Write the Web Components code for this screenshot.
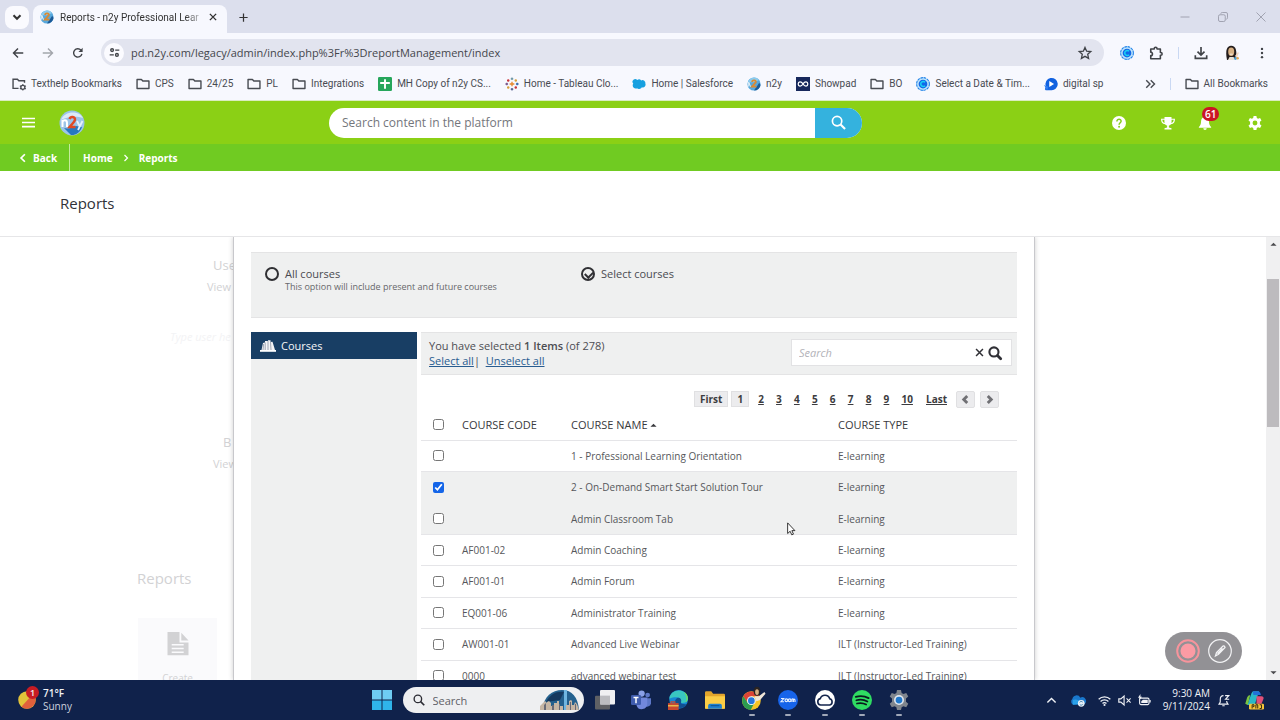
<!DOCTYPE html>
<html lang="en">
<head>
<meta charset="utf-8">
<title>Reports - n2y Professional Learning</title>
<style>
html, body { margin: 0; height: 100%; }
body { font-family: "Open Sans", "Noto Sans", sans-serif; font-size: 11px; color: #404040; overflow: hidden; }
</style>
</head>
<body>
<desktop-screen></desktop-screen>
<script>
const ICONS = {
  down: '<path d="M4 6l4 4 4-4" fill="none" stroke="currentColor" stroke-width="2.400"/>',
  close: '<path d="M3 3l10 10M13 3L3 13" fill="none" stroke="currentColor" stroke-width="2.200"/>',
  thinclose: '<path d="M2 2l12 12M14 2L2 14" fill="none" stroke="currentColor" stroke-width="1.200"/>',
  minus: '<path d="M2 8h12" stroke="currentColor" stroke-width="1.200"/>',
  restore: '<rect x="2" y="5" width="9" height="9" rx="2" fill="none" stroke="currentColor" stroke-width="1.2"/><path d="M5 3.600Q5.400 2 7 2h5q2 0 2 2v5q0 1.600-1.600 2" fill="none" stroke="currentColor" stroke-width="1.2"/>',
  plus: '<path d="M8 2v12M2 8h12" stroke="currentColor" stroke-width="1.8"/>',
  back: '<path d="M15 8H2M8 2L2 8l6 6" fill="none" stroke="currentColor" stroke-width="1.9"/>',
  forward: '<path d="M1 8h13M8 2l6 6-6 6" fill="none" stroke="currentColor" stroke-width="1.9"/>',
  reload: '<path d="M13.2 9.2A5.6 5.6 0 1 1 12 4.2" fill="none" stroke="currentColor" stroke-width="1.9"/><path d="M14.2 1v5.6H8.6z" fill="currentColor"/>',
  tune: '<g fill="none" stroke="currentColor" stroke-width="2"><circle cx="4.5" cy="4.5" r="2"/><path d="M9 4.5h6M1 11.5h6"/><circle cx="11.5" cy="11.5" r="2"/></g>',
  star: '<path d="M8 1.600l1.900 4.300 4.700.5-3.500 3.100 1 4.700L8 11.800l-4.100 2.400 1-4.700L1.400 6.400l4.700-.5z" fill="none" stroke="currentColor" stroke-width="1.5"/>',
  calendly: '<circle cx="8" cy="8" r="7.3" fill="#bfe4fb" stroke="#1b7fe8" stroke-width="1.2" stroke-dasharray="3 .8"/><circle cx="8" cy="8" r="5" fill="#1268e8"/><path d="M10.300 6.100A2.800 2.800 0 1 0 10.300 9.900" fill="none" stroke="#19d0f4" stroke-width="1.800"/>',
  puzzle: '<path d="M2 3.500h4V3a1.600 1.600 0 0 1 3.200 0v.5H13v4h.500a1.500 1.500 0 0 1 0 3H13v4H2v-3.500c2.600 0 2.600-4 0-4z" fill="none" stroke="currentColor" stroke-width="1.800" stroke-linejoin="round"/>',
  download: '<path d="M8 1v9M4 6.500l4 4 4-4M1.500 10.500V14.200h13v-3.700" fill="none" stroke="currentColor" stroke-width="1.900"/>',
  avatar: '<path d="M3 15C1 5 3 1 7 .8c5-.2 6 5 5 13z" fill="#241d1c"/><ellipse cx="7.200" cy="6.800" rx="3" ry="4.200" fill="#d8b184"/><path d="M4 15l1.500-3h4l2 3z" fill="#e8e0d4"/><path d="M11 11l3-4 .8 1-2 5z" fill="#f3d6c1"/><circle cx="11.500" cy="13.500" r="1.400" fill="#4aa0d8"/><circle cx="13.700" cy="13.300" r="1.200" fill="#e4a650"/><path d="M5.800 9.200h3" stroke="#fff" stroke-width=".8"/>',
  dots: '<g fill="currentColor"><circle cx="8" cy="2.500" r="1.600"/><circle cx="8" cy="8" r="1.600"/><circle cx="8" cy="13.500" r="1.600"/></g>',
  folder: '<path d="M1.200 13.200V2.800h5l1.600 1.800h7v8.600z" fill="none" stroke="currentColor" stroke-width="1.600" stroke-linejoin="round"/>',
  foldergear: '<path d="M7.500 13H1.200V2.500h5l1.600 1.800h6.500v2.200" fill="none" stroke="currentColor" stroke-width="1.600"/><circle cx="12.400" cy="11.800" r="2.300" fill="none" stroke="currentColor" stroke-width="1.500"/><path d="M12.400 8v1.500M12.400 14v1.500M9 10l1.300.8M15.800 10l-1.300.8M9 13.700l1.300-.8M15.800 13.700l-1.300-.8" stroke="currentColor" stroke-width="1.200"/>',
  sheets: '<rect width="16" height="16" rx="1.500" fill="#26a65b"/><path d="M8 2.500v11M2.500 6.800h11" stroke="#fff" stroke-width="2.200"/>',
  tableau: '<g stroke-width="1.500"><path d="M8 5.300v5.400M5.300 8h5.400" stroke="#e8862c"/><path d="M8 .5v3M6.600 2h2.800" stroke="#7099a6"/><path d="M8 12.500v3M6.600 14h2.800" stroke="#5b6591"/><path d="M.5 8h3M2 6.600v2.800" stroke="#7b5a8e"/><path d="M12.500 8h3M14 6.600v2.800" stroke="#3b6db0"/><path d="M3.700 2.500v3M2.300 4h2.800" stroke="#c9353c"/><path d="M12.300 2.500v3M10.900 4h2.800" stroke="#d8a03c"/><path d="M3.700 10.500v3M2.300 12h2.800" stroke="#d8a03c"/><path d="M12.300 10.500v3M10.900 12h2.800" stroke="#c9353c"/></g>',
  cloudblue: '<path d="M4 13a3.500 3.500 0 0 1-2.600-5.500A3 3 0 0 1 6 3.400a3.200 3.200 0 0 1 4.500.5 3.400 3.400 0 0 1 4.800 3.600 3.200 3.200 0 0 1-4 4.300A3.200 3.200 0 0 1 6.500 13z" fill="#17a0e0"/>',
  n2y: '<circle cx="13" cy="13" r="12.500" fill="#9cc4e8"/><path d="M2 10C5 1 20 0 24 8c-6-2-14-2-22 2z" fill="#dceaf7"/><path d="M5 18c4 1 8 0 12-2l6 1c-2 6-7 8.500-11 8z" fill="#2678c0"/><path d="M3.500 17v-7M3.500 12c1-2.500 4.500-2.500 4.500 1v4" fill="none" stroke="#fff" stroke-width="2"/><path d="M10.500 9c1-3 6-2.500 5.500.8-.4 2.500-3 4-5.500 7.200h6" fill="none" stroke="#e04a24" stroke-width="2.400"/><path d="M18 11l2.500 5M23.500 11l-4.500 9" stroke="#e6f2fb" stroke-width="1.800"/>',
  n2ysmall: '<circle cx="8" cy="8" r="7.500" fill="#58a8dc"/><path d="M1 6a7.500 7.500 0 0 1 13-2.500L8 6z" fill="#8ccbee"/><path d="M8 15.500l6-9 1.500 2.500a7.500 7.500 0 0 1-7.500 6.500z" fill="#1b5a98"/><path d="M5.500 5.500c1-2.500 5-2 4.500.5L5.800 11h5" fill="none" stroke="#d98a34" stroke-width="2.200"/><path d="M2 11V6l2 5" fill="none" stroke="#fff"/>',
  showpad: '<rect width="16" height="16" fill="#17285c"/><path d="M8 8C6 4.500 2.500 5 2.500 8S6 11.500 8 8s5.500-3 5.500 0S10 11.500 8 8z" fill="none" stroke="#fff" stroke-width="1.400"/>',
  digital: '<path d="M2 15l-1-1 1.200-3.500A7 7 0 1 1 8 15z" fill="#1262e0"/><path d="M6 4.500v7l5.500-3.500z" fill="#fff"/><path d="M0 9l5 2-1.500 4z" fill="#2f7df0"/>',
  dblright: '<path d="M3 3l5 5-5 5M9 3l5 5-5 5" fill="none" stroke="currentColor" stroke-width="1.900"/>',
  menu: '<path d="M0 3h16M0 8h16M0 13h16" stroke="currentColor" stroke-width="2"/>',
  search: '<circle cx="6.500" cy="6.500" r="5" fill="none" stroke="currentColor" stroke-width="1.800"/><path d="M10.200 10.200L15 15" stroke="currentColor" stroke-width="2.200"/>',
  boldsearch: '<circle cx="6.800" cy="6.800" r="5.200" fill="none" stroke="currentColor" stroke-width="2.400"/><path d="M10.800 10.800L14.500 14.500" stroke="currentColor" stroke-width="3.200" stroke-linecap="round"/>',
  help: '<circle cx="8" cy="8" r="8" fill="currentColor"/><path d="M5.600 6.200C5.600 2.700 10.600 3 10.400 6c-.1 1.700-2.300 1.800-2.300 4" fill="none" stroke="#83cd18" stroke-width="1.700"/><circle cx="8.100" cy="12.200" r="1.100" fill="#83cd18"/>',
  trophy: '<path d="M4 1h8v2h4c0 4-1.500 6-4.600 6.300-.7.900-1.600 1.400-2.400 1.600V13l3 1v1.500H4V14l3-1v-2.100c-.8-.2-1.700-.7-2.400-1.600C1.500 9 0 7 0 3h4zM1.500 4.200C1.700 6.300 2.500 7.400 4.200 8 3.800 6.700 3.900 5.500 3.900 4.200zm13 0h-2.400c0 1.300.1 2.500-.3 3.800 1.700-.6 2.500-1.700 2.700-3.800z" fill="currentColor"/>',
  bell: '<path d="M8 1c3 0 4.500 2.200 4.500 5 0 3.500 1 5 2.500 6.500v.8H1v-.8C2.500 11 3.500 9.500 3.500 6 3.500 3.200 5 1 8 1zM6 14h4a2 2 0 0 1-4 0z" fill="currentColor"/>',
  gear: '<path fill-rule="evenodd" d="M6.400 0h3.200l.5 2.300 1.400.8 2.300-.8 1.600 2.800-1.800 1.600v2.600l1.800 1.600-1.600 2.800-2.300-.8-1.400.8-.5 2.300H6.400l-.5-2.300-1.400-.8-2.300.8L.6 10.900l1.800-1.600V6.700L.6 5.100l1.600-2.800 2.300.8 1.400-.8zM8 5.200a2.800 2.800 0 1 0 0 5.600 2.800 2.800 0 0 0 0-5.600z" fill="currentColor"/>',
  left: '<path d="M11 2L5 8l6 6" fill="none" stroke="currentColor" stroke-width="2.800"/>',
  right: '<path d="M5 2l6 6-6 6" fill="none" stroke="currentColor" stroke-width="2.400"/>',
  boldleft: '<path d="M10.500 3L5.500 8l5 5" fill="none" stroke="currentColor" stroke-width="4.200"/>',
  boldright: '<path d="M5.500 3l5 5-5 5" fill="none" stroke="currentColor" stroke-width="4.200"/>',
  books: '<path d="M1.500 12L3 5l2-.5V3h3v-.8h2.500V4l2-.3L15 12z" fill="#f4f4f6"/><path d="M5.200 4.500V12M8 3v9M10.500 4l.5 8M3.600 6L3 12" stroke="#8b93a2" stroke-width=".8"/><path d="M0 12h16v1.800H0z" fill="#fff"/>',
  up: '<path d="M1 11l7-7 7 7z" fill="currentColor"/>',
  downfill: '<path d="M1 5l7 7 7-7z" fill="currentColor"/>',
  doc: '<path fill-rule="evenodd" d="M1 0h8v7h6v8.500H1zM3.800 8v1h8V8zm0 2.500v1h8v-1zm0 2.500v1h8v-1zM10.200.5L15 5.700h-4.800z" fill="currentColor"/>',
  chevup: '<path d="M2 11l6-6 6 6" fill="none" stroke="currentColor" stroke-width="2"/>',
  onedrive: '<path d="M3.500 12.500a3.500 3.500 0 0 1-1-6A4.500 4.500 0 0 1 11 5a3.800 3.800 0 0 1 4 7z" fill="#1a78cc"/><path d="M3 7.500c3-1.500 6-.5 11 4l-11 1z" fill="#2aa0e8"/><circle cx="12" cy="11" r="3.600" fill="#e8f0f6"/><path d="M10.300 10a2 2 0 0 1 3.200-.3M13.700 12a2 2 0 0 1-3.200.3" fill="none" stroke="#3c7cac" stroke-width="1"/>',
  wifi: '<g fill="none" stroke="currentColor" stroke-width="1.500"><path d="M.8 6.500a10 10 0 0 1 14.400 0M3.200 9.200a6.600 6.600 0 0 1 9.600 0M5.600 11.700a3.300 3.300 0 0 1 4.800 0"/></g><circle cx="8" cy="13.600" r="1.300" fill="currentColor"/>',
  mute: '<path d="M1 6h2.500L7.500 2.500v11L3.500 10H1z" fill="none" stroke="currentColor" stroke-width="1.400"/><path d="M10.500 5.500l5 5M15.500 5.500l-5 5" stroke="currentColor" stroke-width="1.300"/>',
  battery: '<rect x="2" y="5" width="11.500" height="8" rx="1.500" fill="none" stroke="currentColor" stroke-width="1.400"/><path d="M14.800 7.500v3" stroke="currentColor" stroke-width="1.600"/><path d="M6 7h6v4H4V9z" fill="currentColor"/><path d="M3 0L0 4.500h2L1 8l4-4.500H3z" fill="currentColor"/>',
  bellz: '<path d="M8 2C5 2 4 4.500 4 7v3l-1.500 2.500h11L12 10V8.500M6.500 14.500h3M10 2h4.500L10.500 6.500H15" fill="none" stroke="currentColor" stroke-width="1.400"/>',
  copilot: '<path d="M3 11L6 2.500Q6.500 1 8 1h4L9 10.500Q8.500 12 7 12H2.500z" fill="#28b8c8"/><path d="M1 11l1.500-5Q3 4 5 4l-2 8z" fill="#7cc440"/><path d="M7 1h4q2 0 2.500 3h-6z" fill="#2270d8"/><path d="M10 5h4q2 0 1.600 2L14 11h-4z" fill="#e05078"/><rect x="4" y="11" width="12" height="4.600" rx="1" fill="#f5c53a"/><path d="M6.500 14.800v-3h1.500v1.500h-1M9.500 14.800v-3h1.500v3M12.500 14.800h1.500v-3h-1.500" fill="none" stroke="#3a2d10" stroke-width=".8"/>',
  weather: '<circle cx="8" cy="8" r="7.800" fill="#e2c23a"/><path d="M13.500 2.500A7.800 7.800 0 0 1 3 14z" fill="#e0603c"/>',
  windows: '<path d="M0 0h7.600v7.600H0zM8.400 0H16v7.600H8.400z" fill="#6fccf3"/><path d="M0 8.400h7.600V16H0zM8.400 8.400H16V16H8.400z" fill="#2fb4ea"/>',
  skyline: '<path d="M2 20C4 6 12 0 22 0s16 7 17 20z" fill="#24618e"/><path d="M6 12C10 4 17 1 24 2l-4 8z" fill="#15385e"/><path d="M24 0h3v20h-3z" fill="#70b6e0"/><path d="M0 20v-4l5-5 2 2v-1l2-1 2 2v3h3v-3h3v-2h2v5h4v4zM26 20v-5h3v-4l2-1 1 1v4h2l1-3 2 2 2 6z" fill="#c6b6a4"/><path d="M4 20v-5l2-2v7zM12 20v-5h2v5zM19 20v-6h1v6zM30 20v-8h1v8zM35 20v-6h1v6z" fill="#686a76"/>',
  taskview: '<rect x="0" y="4.500" width="12" height="11" rx=".8" fill="#5f6064"/><rect x="4" y="0" width="12" height="11.500" rx=".8" fill="#f0f0f2"/><path d="M4 4.500h8v7H4z" fill="#bcbcc0"/>',
  teams: '<circle cx="13.300" cy="4" r="1.900" fill="#5d77c8"/><circle cx="8.500" cy="2.800" r="2.500" fill="#8aa0e8"/><path d="M11 6.500h5v4a3 3 0 0 1-5 2z" fill="#5d77c8"/><path d="M4.500 6h8.500v5a4.400 4.400 0 0 1-8.500 1.500z" fill="#7288dc"/><rect x="0" y="4" width="8" height="8" rx="1" fill="#3f5cae"/><path d="M2 6h4M4 6v4.500" stroke="#fff" stroke-width="1.200"/>',
  edge: '<circle cx="8.500" cy="7.500" r="7.500" fill="#1787d4"/><path d="M1 7C2-1 14-2 16 6c.6 4-4 5-6 4 2-3-2-6-9-3z" fill="#39c6c0"/><path d="M13 1.500C16 3.500 17 8 14 10c2-4 0-6-1-8.500z" fill="#74dc50"/><path d="M5.500 10c0-3 3-5 4.500-3 1.500 2-.5 3 1 4l4 .5c-2 4-9.500 4-9.500-1.500z" fill="#124f90"/><rect x="0" y="10.500" width="8.500" height="5.500" fill="#c84830"/><path d="M0 12h8.500v1.200H0z" fill="#e8b84c"/><path d="M2.500 10.500v-1h3v1" stroke="#c84830" fill="none"/>',
  explorer: '<path d="M0 2q0-1 1-1h4l1.500 2H15q1 0 1 1v11H0z" fill="#e2a52c"/><path d="M0 5h16v9q0 1-1 1H1q-1 0-1-1z" fill="#fbcd45"/><path d="M2.500 15v-2.500q0-1.500 1.500-1.500h8q1.500 0 1.500 1.500V15z" fill="#1c7fd0"/><path d="M4.500 12.500h7" stroke="#0d5a9c" stroke-width="1"/>',
  chrome: '<circle cx="7.500" cy="8.500" r="7.500" fill="#f6c526"/><path d="M1 5a7.500 7.500 0 0 1 13 0H7.500L4.500 10z" fill="#dc4437"/><path d="M1 5a7.500 7.500 0 0 0 6 11l3-6-5.500 0z" fill="#2c9c50"/><circle cx="7.500" cy="8.500" r="3.500" fill="#f4f8fc"/><circle cx="7.500" cy="8.500" r="2.700" fill="#2878dc"/><ellipse cx="12" cy="1" rx="2.600" ry="3.600" fill="#2a2422"/><ellipse cx="12" cy="1.600" rx="1.500" ry="2.300" fill="#d8b184"/><path d="M10 5l3.500 0L18 1.500l.8 1.500L14.500 8l-3 1z" fill="#f0e6d8"/>',
  zoom: '<circle cx="8" cy="8" r="8" fill="#1764ea"/><g fill="none" stroke="#e6effe" stroke-width=".9"><path d="M2.400 6.800h2.200l-2.200 2.600h2.400"/><circle cx="6.700" cy="8.200" r="1.100"/><circle cx="9.300" cy="8.200" r="1.100"/><path d="M11.100 9.600V7.400q1-.8 1.200.4v1.800V7.800q1.200-1 1.300.2v1.600"/></g>',
  cloud: '<circle cx="8" cy="8" r="8" fill="#fff"/><path d="M4.500 12a2.600 2.600 0 0 1-.3-5.100A4 4 0 0 1 11.800 7a2.600 2.600 0 0 1 0 5z" fill="#fff" stroke="#14254c" stroke-width="1.300"/>',
  spotify: '<circle cx="8" cy="8" r="8" fill="#2fdc62"/><path d="M3 5.500q5.500-1.600 10.300 1M3.500 8.200q4.800-1.300 8.800 1M4 10.800q4-1 7.300.8" fill="none" stroke="#0a1a1e" stroke-width="1.400" stroke-linecap="round"/>',
  settings: '<path d="M6.400 0h3.200l.5 2.300 1.400.8 2.300-.8 1.600 2.800-1.800 1.600v2.600l1.800 1.600-1.600 2.800-2.300-.8-1.400.8-.5 2.300H6.400l-.5-2.300-1.400-.8-2.300.8L.6 10.900l1.800-1.600V6.700L.6 5.100l1.600-2.800 2.300.8 1.400-.8z" fill="#80868e"/><circle cx="8" cy="8" r="4" fill="#dfe6ee"/><circle cx="8" cy="8" r="2.700" fill="#2078cc"/>',
  record: '<circle cx="12" cy="12" r="10.800" fill="none" stroke="#f7949c" stroke-width="2"/><circle cx="12" cy="12" r="7.500" fill="#fb9ba4"/>',
  pen: '<circle cx="12" cy="12" r="11.300" fill="none" stroke="#f2f2f4" stroke-width="1.200"/><path d="M7.500 17l1-3.500 6.500-6.500q1.500-.5 2 1.500l-6.500 6.800zM9.500 14.800L14.500 9.500" fill="none" stroke="#f2f2f4" stroke-width="1.300"/>',
  cursor: '<path d="M.7.700v11.800l2.800-2.500 1.800 4 1.900-.8-1.800-3.900h3.400z" fill="#fff" stroke="#222" stroke-width="1"/>'
};
const BOXES = { n2y: '0 0 26 26', skyline: '0 0 40 20', record: '0 0 24 24', pen: '0 0 24 24', cursor: '0 0 10 15' };
const BASE = '*{box-sizing:border-box}button,input{font:inherit;color:inherit;margin:0;padding:0;border:0;background:none}button{display:flex;align-items:center;justify-content:center}a{color:inherit;text-decoration:none}';

function define(tag, css, html) {
  const template = document.createElement('template');
  customElements.define(tag, class extends HTMLElement {
    connectedCallback() {
      if (this.shadowRoot) return;
      template.innerHTML = '<style>' + BASE + css + '</style>' + (typeof html === 'function' ? html(this) : html);
      this.attachShadow({ mode: 'open' }).append(template.content.cloneNode(true));
    }
  });
}

define('ui-icon', ':host{display:block;flex:none;width:14px;height:14px}svg{display:block;width:100%;height:100%;overflow:visible}',
  el => { const n = el.getAttribute('name'); return `<svg viewBox="${BOXES[n] || '0 0 16 16'}" aria-hidden="true">${ICONS[n]}</svg>`; });

define('tab-strip', `
:host{display:flex;height:33px;background:#dcdfed;padding:5px 13px 0 5px;align-items:center;color:#333}
.list{width:24px;height:23px;border-radius:8px;background:#fafafe;margin:0 4px 4px 0}
.list ui-icon{width:14px;height:14px}
.tab{width:194px;height:28px;display:flex;align-items:center;gap:6px;padding:0 9px 4px 7px;background:#f7f8fe;border-radius:8px 8px 0 0;font-family:Roboto,"Open Sans",sans-serif;font-size:10px}
.tab span{flex:1;white-space:nowrap;-webkit-mask-image:linear-gradient(90deg,#000 88%,#0003)}
.tab .x,.tab .x ui-icon{width:10px;height:10px}
.new{margin-left:11px;padding-bottom:4px}.new ui-icon{width:11px;height:11px}
.win{margin-left:auto;display:flex;gap:26px;color:#9a9caa;padding-bottom:4px}
.win ui-icon{width:12px;height:12px}`,
`<button class="list" aria-label="Search tabs"><ui-icon name="down"></ui-icon></button>
<div class="tab"><ui-icon name="n2ysmall"></ui-icon><span>Reports - n2y Professional Lear</span><button class="x" aria-label="Close tab"><ui-icon name="close"></ui-icon></button></div>
<button class="new" aria-label="New tab"><ui-icon name="plus"></ui-icon></button>
<div class="win"><button aria-label="Minimize"><ui-icon name="minus"></ui-icon></button><button aria-label="Restore"><ui-icon name="restore"></ui-icon></button><button aria-label="Close"><ui-icon name="thinclose"></ui-icon></button></div>`);

define('address-bar', `
:host{display:flex;height:39px;align-items:center;background:#f7f8fe;padding:0 12px;color:#404348}
.nav{display:flex;gap:18px;margin-right:17px}.nav ui-icon,.tools ui-icon{width:12px;height:12px}.nav button:nth-child(2){color:#a3a6ac}
.box{flex:1;height:27px;display:flex;align-items:center;border-radius:14px;background:#e2e4ef;padding:0 12px 0 3px}
.tune{width:20px;height:20px;border-radius:50%;background:#fbfbff;margin-right:7px}.tune ui-icon{width:11px;height:11px}
input{flex:1;min-width:0;height:24px;font-size:11px;color:#44464c;outline:0}
.tools{display:flex;align-items:center;gap:15px;margin-left:16px}
.tools ui-icon{width:14px;height:14px}.tools hr{width:1px;height:12px;border:0;background:#c9d8f3;margin:0}
.tools .pic{width:18px;height:16px}.tools .dots{width:12px;height:12px}`,
`<div class="nav"><button aria-label="Back"><ui-icon name="back"></ui-icon></button><button aria-label="Forward"><ui-icon name="forward"></ui-icon></button><button aria-label="Reload"><ui-icon name="reload"></ui-icon></button></div>
<div class="box"><button class="tune" aria-label="Site information"><ui-icon name="tune"></ui-icon></button><input aria-label="Address" value="pd.n2y.com/legacy/admin/index.php%3Fr%3DreportManagement/index"><button aria-label="Bookmark this page"><ui-icon name="star"></ui-icon></button></div>
<div class="tools"><button aria-label="Calendly"><ui-icon name="calendly"></ui-icon></button><button aria-label="Extensions"><ui-icon name="puzzle"></ui-icon></button><hr><button aria-label="Downloads"><ui-icon name="download"></ui-icon></button><button aria-label="Profile"><ui-icon class="pic" name="avatar"></ui-icon></button><button aria-label="Menu"><ui-icon class="dots" name="dots"></ui-icon></button></div>`);

define('bookmark-link', `:host{display:block;flex:none}a{display:flex;align-items:center;gap:5px;white-space:nowrap}`,
  el => `<a href="#"><ui-icon name="${el.getAttribute('icon')}"></ui-icon><slot></slot></a>`);

define('bookmarks-bar', `
:host{display:flex;height:29px;align-items:center;padding:0 12px 5px;gap:14px;background:#f7f8fe;color:#484b52;font-family:Roboto,"Open Sans",sans-serif;font-size:10px;border-bottom:1px solid #d9ecc0}
.end{margin-left:auto;display:flex;align-items:center;gap:14px}.end .more{width:12px;height:12px}hr{width:1px;height:12px;border:0;background:#c9d8f3;margin:0}`,
[['foldergear','Texthelp Bookmarks'],['folder','CPS'],['folder','24/25'],['folder','PL'],['folder','Integrations'],['sheets','MH Copy of n2y CS...'],['tableau','Home - Tableau Clo...'],['cloudblue','Home | Salesforce'],['n2ysmall','n2y'],['showpad','Showpad'],['folder','BO'],['calendly','Select a Date &amp; Tim...'],['digital','digital sp']].map(([i, t]) => `<bookmark-link icon="${i}">${t}</bookmark-link>`).join('') +
`<div class="end"><button aria-label="More bookmarks"><ui-icon class="more" name="dblright"></ui-icon></button><hr><bookmark-link icon="folder">All Bookmarks</bookmark-link></div>`);

define('site-header', `
:host{display:grid;grid-template-columns:329fr 533fr 418fr;align-items:center;height:43px;background:#8bd015;color:#fff}
.left{display:flex;align-items:center;gap:23px;padding-left:21px}.left .menu{width:15px;height:13px}.left .logo{width:26px;height:26px}
form{display:flex;height:30px;border-radius:15px;overflow:hidden;background:#fff}
input{flex:1;min-width:0;padding-left:13px;font-size:12px;outline:0;color:#555}input::placeholder{color:#74767c;opacity:1}
form button{width:47px;background:#34b2de}form ui-icon{width:15px;height:15px}
.right{display:flex;justify-content:flex-end;align-items:center;gap:35px;padding-right:18px}
.note{position:relative;margin:0 1px 0 -12px}.badge{position:absolute;left:4px;top:-9px;background:#cb1526;border-radius:8px;font-size:10px;line-height:14px;padding:0 3px;font-weight:600}`,
`<div class="left"><button aria-label="Menu"><ui-icon class="menu" name="menu"></ui-icon></button><a href="#" aria-label="n2y home"><ui-icon class="logo" name="n2y"></ui-icon></a></div>
<form><input type="text" aria-label="Search content" placeholder="Search content in the platform"><button type="button" aria-label="Search"><ui-icon name="search"></ui-icon></button></form>
<div class="right"><button aria-label="Help"><ui-icon name="help"></ui-icon></button><button aria-label="Awards"><ui-icon name="trophy"></ui-icon></button><button class="note" aria-label="Notifications"><ui-icon name="bell"></ui-icon><span class="badge">61</span></button><button aria-label="Settings"><ui-icon name="gear"></ui-icon></button></div>`);

define('crumb-bar', `
:host{display:flex;height:27px;align-items:center;background:#70cb22;color:#fff;font-size:10px;font-weight:700}
.back{display:flex;align-items:center;gap:5px;padding:0 12px 0 18px;height:100%;border-right:1px solid #c5ec9c;margin-right:13px}
ui-icon{width:10px;height:10px}ui-icon.sep{width:8px;height:8px;margin:0 9px}`,
`<a class="back" href="#"><ui-icon name="left"></ui-icon>Back</a><a href="#">Home</a><ui-icon class="sep" name="right"></ui-icon><a href="#">Reports</a>`);

define('page-title', `:host{display:block;padding:0 60px;height:66px;background:#fff;border-bottom:1px solid #e6e6e8}h1{margin:0;font-size:15px;line-height:65px;font-weight:500;color:#303238}`, `<h1><slot></slot></h1>`);

define('page-backdrop', `
:host{display:block;color:#d2d2d4;font-size:11px;overflow:hidden}
.col{width:calc(50% - 399px);height:100%;display:grid;grid-template-rows:58px 113px 66px 116px 1fr;white-space:nowrap}
.s{justify-self:end;width:27px;padding-top:16px}.s p,.s h2{margin:0;font-weight:400}.s h2{font-size:13px;line-height:24px;padding-left:6px}.s p{line-height:20px}
.b{padding-top:22px;width:21px}.b h2{padding-left:10px}
.type{justify-self:end;align-self:start;margin-top:34px;color:#f3f3f5;font-style:italic;width:64px}
.rep{margin-left:137px;align-self:end}h3{margin:0;font-size:15px;font-weight:400;line-height:24px}
.card{margin:28px 0 0 138px;width:79px;background:#fafafc;height:80px;display:flex;flex-direction:column;align-items:center;padding-top:13px;gap:14px;font-size:10px}.card ui-icon{width:24px;height:26px}`,
`<div class="col"><div class="s"><h2>Use</h2><p>View</p></div><div class="type">Type user he</div><div class="s b"><h2>B</h2><p>View</p></div><div class="rep"><h3>Reports</h3></div><div class="card"><ui-icon name="doc"></ui-icon>Create</div></div>`);

define('course-scope', `
:host{display:grid;grid-template-columns:316px 1fr;height:66px;background:#eff0f0;border:1px solid #e4e4e5;border-width:1px 0;padding:14px;color:#4a4b50}
label{display:grid;grid-template-columns:14px 1fr;gap:0 6px;align-items:center;line-height:14px;align-content:start}
small{grid-column:2;font-size:9px;line-height:12px;color:#66676a}
input{appearance:none;width:14px;height:14px;border:2px solid #303034;border-radius:50%;position:relative}
input:checked::after{content:"";position:absolute;left:2px;top:2px;width:6px;height:4px;border:solid #303034;border-width:0 0 2px 2px;transform:rotate(-45deg)}`,
`<label><input type="radio" name="scope">All courses<small>This option will include present and future courses</small></label><label><input type="radio" name="scope" checked>Select courses</label>`);

define('course-nav', `
:host{display:block;background:#eff0f0;width:166px}
a{display:flex;align-items:center;gap:5px;height:27px;padding:0 9px;background:#183e64;color:#f4f6f8;font-size:11px}ui-icon{width:16px;height:16px}`,
`<a href="#"><ui-icon name="books"></ui-icon>Courses</a>`);

define('selection-bar', `
:host{display:flex;justify-content:space-between;align-items:center;height:43px;background:#eff0f0;border:1px solid #e4e4e5;border-width:1px 0;padding:0 5px 2px 8px;color:#4c4d52}
p{margin:0;line-height:15px}b{font-weight:600}p a{color:#285c90;text-decoration:underline;font-weight:500}
form{display:flex;align-items:center;width:221px;height:27px;background:#fff;border:1px solid #e2e2e4;padding:0 9px 0 7px;gap:3px;color:#303036}
input{flex:1;min-width:0;font-style:italic;outline:0}input::placeholder{color:#b2b2b8;opacity:1}
.x{width:11px;height:11px}`,
`<div><p>You have selected <b>1 Items</b> (of 278)</p><p><a href="#">Select all</a>| &nbsp;<a href="#">Unselect all</a></p></div>
<form><input type="text" aria-label="Search courses" placeholder="Search"><button type="button" aria-label="Clear"><ui-icon class="x" name="close"></ui-icon></button><button type="button" aria-label="Search"><ui-icon name="boldsearch"></ui-icon></button></form>`);

define('page-links', `
:host{display:flex;align-items:center;justify-content:flex-end;height:34px;padding:14px 18px 0 0;color:#3c3c40;font-size:10px;font-weight:700}
nav{display:flex;align-items:center;width:305px}
a{display:block;line-height:14px;text-decoration:underline}
.nums{flex:1;display:flex;justify-content:space-between;margin:0 13px 0 9px}
.on{background:#ececee;border:1px solid #e0e0e2;text-decoration:none;padding:0 5px}.one{margin-left:3px}
button{width:19px;height:17px;background:#ececee;border:1px solid #e0e0e2;border-radius:2px;color:#707074;margin-left:5px}.last{margin-right:4px}ui-icon{width:11px;height:11px}`,
`<nav aria-label="Pages"><a class="on" href="#">First</a><a class="on one" href="#">1</a><div class="nums">${[2,3,4,5,6,7,8,9,10].map(n => `<a href="#">${n}</a>`).join('')}</div><a class="last" href="#">Last</a><button aria-label="Previous page"><ui-icon name="boldleft"></ui-icon></button><button aria-label="Next page"><ui-icon name="boldright"></ui-icon></button></nav>`);

const COURSES = [
  ['', '1 - Professional Learning Orientation', 'E-learning'],
  ['', '2 - On-Demand Smart Start Solution Tour', 'E-learning', 'picked'],
  ['', 'Admin Classroom Tab', 'E-learning', 'hover'],
  ['AF001-02', 'Admin Coaching', 'E-learning'],
  ['AF001-01', 'Admin Forum', 'E-learning'],
  ['EQ001-06', 'Administrator Training', 'E-learning'],
  ['AW001-01', 'Advanced Live Webinar', 'ILT (Instructor-Led Training)'],
  ['0000', 'advanced webinar test', 'ILT (Instructor-Led Training)']
];
define('course-table', `
:host{display:block;color:#56575b}
table{width:100%;height:283px;border-collapse:collapse;table-layout:fixed;font-size:10px}
tr{height:31px}
th{font-size:11px;font-weight:400;text-align:left;color:#38393d}
th,td{padding:0;border-bottom:1px solid #e5e5e8}
.c{width:41px;padding-left:12px}.code{width:109px}.name{width:267px}
.picked td,.hover td{background:#eff0f0}.picked td{border-bottom-color:#eff0f0}
input{display:block;width:11px;height:11px;accent-color:#1465e8}
th ui-icon{display:inline-block;width:7px;height:7px;margin-left:2px}`,
`<table><thead><tr><th class="c"><input type="checkbox" aria-label="Select all rows"></th><th class="code">COURSE CODE</th><th class="name">COURSE NAME<ui-icon name="up"></ui-icon></th><th>COURSE TYPE</th></tr></thead><tbody>${COURSES.map(r => `<tr class="${r[3] || ''}"><td class="c"><input type="checkbox" aria-label="${r[1]}"${r[3] === 'picked' ? ' checked' : ''}></td><td>${r[0]}</td><td>${r[1]}</td><td>${r[2]}</td></tr>`).join('')}</tbody></table>`);

define('course-dialog', `
:host{display:block;width:802px;background:#fff;border:1px solid #c8c8cc;border-width:0 1px;box-shadow:0 0 5px #0003;padding:15px 17px 0 17px;box-sizing:border-box;overflow:hidden}
.cols{display:flex;gap:4px;margin-top:14px;height:100%}.main{flex:1;min-width:0}`,
`<course-scope></course-scope><div class="cols"><course-nav></course-nav><div class="main"><selection-bar></selection-bar><page-links></page-links><course-table></course-table></div></div>`);

define('scroll-bar', `
:host{display:flex;flex-direction:column;justify-content:space-between;align-items:center;width:14px;background:#f0f0f1;color:#4a4a4e;padding:4px 0;box-sizing:border-box}
ui-icon{width:7px;height:7px}.track{flex:1;align-self:stretch;padding:31px 1px 0}.thumb{height:38%;background:#bdbbbe}`,
`<ui-icon name="up"></ui-icon><div class="track"><div class="thumb"></div></div><ui-icon name="downfill"></ui-icon>`);

define('screen-recorder', `
:host{display:flex;align-items:center;gap:8px;padding:7px 10px 7px 11px;border-radius:19px;background:#929195}
ui-icon{width:24px;height:24px}`,
`<button aria-label="Stop recording"><ui-icon name="record"></ui-icon></button><button aria-label="Draw"><ui-icon name="pen"></ui-icon></button>`);

define('task-bar', `
:host{display:grid;grid-template-columns:1fr 537px 1fr;align-items:center;height:40px;background:#10224b;color:#f0f2f6;font-size:10px;line-height:13px}
.weather{display:flex;align-items:center;gap:7px;padding-left:18px}.sun{position:relative}.sun ui-icon{width:18px;height:18px}.sun b{position:absolute;left:8px;top:-5px;width:13px;height:13px;border-radius:50%;background:#c81c24;text-align:center;font-weight:600;font-size:9px}
.weather span{color:#ccd2de}.weather strong{font-weight:600;color:#f0f2f6}
.apps{display:flex;align-items:center;gap:11px}.start ui-icon,.list ui-icon{width:20px;height:20px}
label{display:flex;align-items:center;width:181px;height:26px;background:#eeeff1;border-radius:13px;padding:0 4px 0 10px;gap:8px;color:#2c2c34}label ui-icon{width:12px;height:12px}label input{flex:1;min-width:0;font-size:11px;outline:0}label input::placeholder{color:#606066;opacity:1}label .art{width:40px;height:20px}
.list{flex:1;display:flex;justify-content:space-between}.list button{position:relative}.run::after{content:"";position:absolute;bottom:-6px;width:6px;height:2px;border-radius:1px;background:#a0a8b8}
.tray{display:flex;align-items:center;justify-content:flex-end;padding-right:16px;gap:7px}.tray ui-icon{width:13px;height:13px}.tray .up{width:11px;height:11px;margin-right:6px}.tray .drive{margin-right:6px;width:15px;height:15px}.tray time{text-align:right;margin-left:5px}.tray .co{width:20px;height:20px;margin-left:7px}`,
`<div class="weather"><div class="sun"><ui-icon name="weather"></ui-icon><b>1</b></div><span><strong>71°F</strong><br>Sunny</span></div>
<div class="apps"><button class="start" aria-label="Start"><ui-icon name="windows"></ui-icon></button><label><ui-icon name="search"></ui-icon><input type="text" aria-label="Search Windows" placeholder="Search"><ui-icon class="art" name="skyline"></ui-icon></label>
<div class="list">${['taskview', 'teams', 'edge', 'explorer', 'chrome', 'zoom', 'cloud', 'spotify', 'settings'].map((n, i) => `<button class="${i > 3 ? 'run' : ''}" aria-label="${n}"><ui-icon name="${n}"></ui-icon></button>`).join('')}</div></div>
<div class="tray"><ui-icon class="up" name="chevup"></ui-icon><ui-icon class="drive" name="onedrive"></ui-icon><ui-icon name="wifi"></ui-icon><ui-icon name="mute"></ui-icon><ui-icon name="battery"></ui-icon><time datetime="2024-09-11T09:30">9:30 AM<br>9/11/2024</time><ui-icon name="bellz"></ui-icon><ui-icon class="co" name="copilot"></ui-icon></div>`);

define('desktop-screen', `
:host{display:flex;flex-direction:column;height:100vh;position:relative;background:#fff}
main{flex:1;min-height:0;overflow:hidden;display:grid;grid-template-columns:1fr 14px;grid-template-rows:100%}
page-backdrop{grid-area:1/1}course-dialog{grid-area:1/1;justify-self:center;margin-left:2px;z-index:1}scroll-bar{grid-area:1/2}
screen-recorder{position:absolute;right:38px;bottom:50px;z-index:2}.cursor{position:absolute;left:787px;top:522px;width:9px;height:14px;z-index:3}`,
`<tab-strip></tab-strip><address-bar></address-bar><bookmarks-bar></bookmarks-bar><site-header></site-header><crumb-bar></crumb-bar><page-title>Reports</page-title>
<main><page-backdrop></page-backdrop><course-dialog></course-dialog><scroll-bar></scroll-bar></main>
<task-bar></task-bar><screen-recorder></screen-recorder><ui-icon class="cursor" name="cursor"></ui-icon>`);
</script>
</body>
</html>
